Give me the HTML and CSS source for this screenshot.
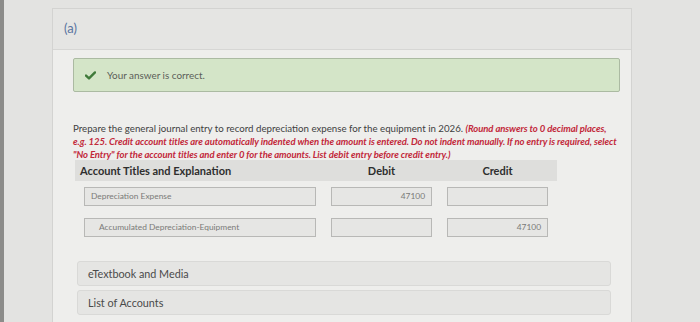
FILE: index.html
```html
<!DOCTYPE html>
<html>
<head>
<meta charset="utf-8">
<link rel="stylesheet" href="styles.css">
</head>
<body>
<div class="screen">
  <div class="edge"></div>
  <div class="panel">
    <div class="panel-head">(a)</div>
    <div class="panel-body">
      <div class="correct">
        <svg class="check" width="11" height="9" viewBox="0 0 11 9"><path d="M1 4.6 L4 7.4 L10 1.4" fill="none" stroke="#3f7a3a" stroke-width="2.4" stroke-linecap="round" stroke-linejoin="round"/></svg>
        <span>Your answer is correct.</span>
      </div>
      <p class="prompt">Prepare the general journal entry to record depreciation expense for the equipment in 2026. <em>(Round answers to 0 decimal places,<br>e.g. 125. Credit account titles are automatically indented when the amount is entered. Do not indent manually. If no entry is required, select<br>"No Entry" for the account titles and enter 0 for the amounts. List debit entry before credit entry.)</em></p>
      <div class="journal">
        <div class="jhead">
          <div class="h-acct">Account Titles and Explanation</div>
          <div class="h-num">Debit</div>
          <div class="h-num">Credit</div>
        </div>
        <div class="jrow">
          <div class="field">Depreciation Expense</div>
          <div class="field num">47100</div>
          <div class="field num"></div>
        </div>
        <div class="jrow">
          <div class="field indent">Accumulated Depreciation-Equipment</div>
          <div class="field num"></div>
          <div class="field num">47100</div>
        </div>
      </div>
      <div class="links">
        <div class="link">eTextbook and Media</div>
        <div class="link">List of Accounts</div>
      </div>
    </div>
  </div>
</div>
</body>
</html>
```
FILE: styles.css
```css
html, body {
  margin: 0;
  padding: 0;
}
body {
  width: 700px;
  height: 322px;
  overflow: hidden;
  background: #e3e3e1;
  font-family: Lato, "Liberation Sans", sans-serif;
}
.screen {
  display: flex;
  height: 322px;
}
.edge {
  width: 4px;
  background: #8c8c8a;
  flex: none;
}
.panel {
  margin-left: 48px;
  margin-top: 8px;
  width: 578px;
  border: 1px solid #d3d3d1;
  border-bottom: none;
  background: #eeeeec;
  flex: none;
}
.panel-head {
  height: 41px;
  background: #e5e5e3;
  border-bottom: 1px solid #d6d6d4;
  box-sizing: border-box;
  padding-left: 11px;
  line-height: 39px;
  font-size: 13px;
  color: #5a74a0;
}
.panel-body {
  padding: 8px 11px 0 20px;
}
.correct {
  height: 34px;
  box-sizing: border-box;
  background: #d4e5c8;
  border: 1px solid #abbaa2;
  border-radius: 2px;
  display: flex;
  align-items: center;
  padding-left: 11px;
  font-size: 9.9px;
  color: #5b5e58;
}
.check {
  margin-right: 11px;
}
.prompt {
  margin: 30px 0 0 0;
  font-size: 9.7px;
  line-height: 13px;
  color: #404040;
  white-space: nowrap;
}
.prompt em {
  color: #c2283a;
  font-weight: 700;
  font-size: 9.5px;
  letter-spacing: -0.08px;
}
.journal {
  margin-top: -1px;
  margin-left: 2px;
  width: 482px;
}
.jhead {
  height: 21px;
  background: #dededc;
  display: grid;
  grid-template-columns: 232px 101px 101px;
  column-gap: 15px;
  padding-left: 9px;
  align-items: center;
  font-size: 11px;
  font-weight: 700;
  color: #2e2e2e;
}
.h-acct {
  margin-left: -4px;
}
.h-num {
  text-align: center;
}
.jrow {
  display: grid;
  grid-template-columns: 232px 101px 101px;
  column-gap: 15px;
  padding-left: 9px;
  margin-top: 6px;
}
.jrow + .jrow {
  margin-top: 12px;
}
.field {
  height: 19px;
  box-sizing: border-box;
  border: 1px solid #b8b8b6;
  background: #e6e6e4;
  font-size: 8.4px;
  color: #7a7a78;
  line-height: 17px;
  padding: 0 6px;
}
.field.indent {
  padding-left: 14px;
}
.field.num {
  text-align: right;
}
.links {
  margin-top: 24px;
  margin-left: 4px;
  width: 534px;
  display: flex;
  flex-direction: column;
  gap: 4px;
}
.link {
  height: 25px;
  box-sizing: border-box;
  background: #e5e5e3;
  border: 1px solid #d9d9d7;
  border-radius: 3px;
  padding-left: 10px;
  line-height: 23px;
  font-size: 10.8px;
  color: #4a4a4a;
}
```
